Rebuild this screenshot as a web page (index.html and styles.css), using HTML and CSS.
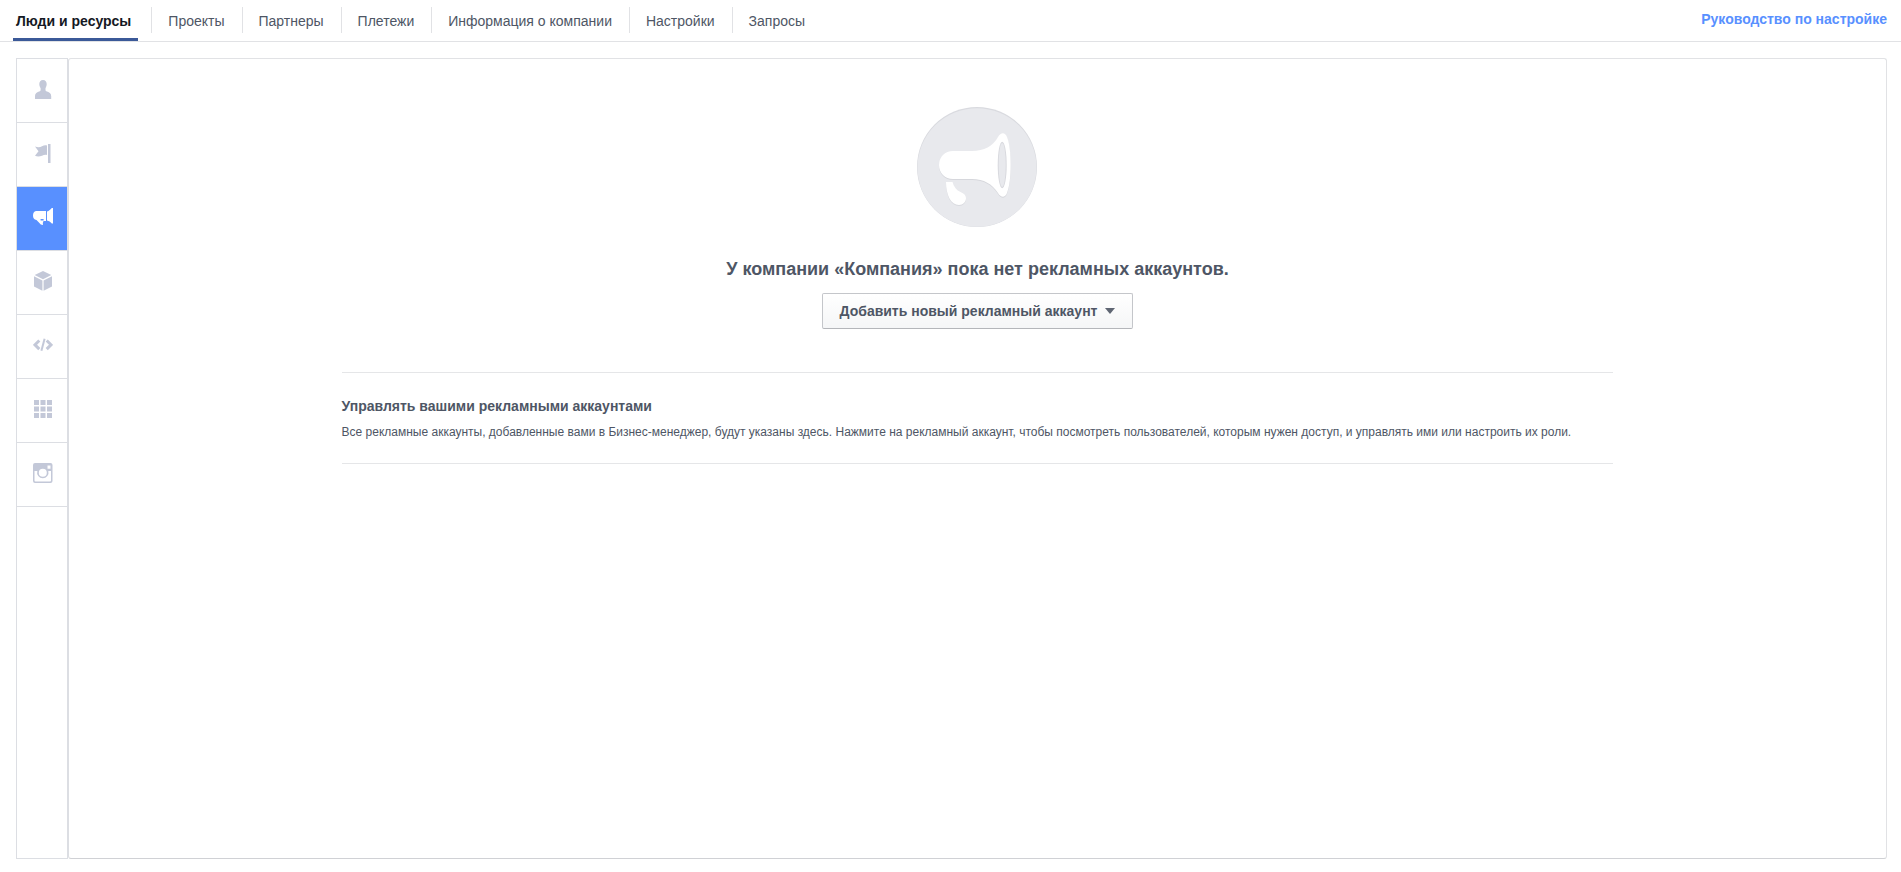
FILE: index.html
```html
<!DOCTYPE html>
<html lang="ru">
  <head>
    <meta charset="UTF-8" />
    <meta name="viewport" content="width=device-width, initial-scale=1" />
    <title>Люди и ресурсы</title>
    <link rel="stylesheet" href="styles.css">
  </head>
  <body>
    <header class="topbar">
      <nav class="tabs">
        <a class="tab active" href="#">Люди и ресурсы</a>
        <a class="tab" href="#">Проекты</a>
        <a class="tab" href="#">Партнеры</a>
        <a class="tab" href="#">Плетежи</a>
        <a class="tab" href="#">Информация о компании</a>
        <a class="tab" href="#">Настройки</a>
        <a class="tab" href="#">Запросы</a>
      </nav>
      <a class="guide" href="#">Руководство по настройке</a>
    </header>

    <main class="content">
      <nav class="sidebar">
        <a class="side-item" href="#" aria-label="Люди">
          <svg width="20" height="20" viewBox="0 0 20 20">
            <path d="M10 1c2.500 0 3.700 1.700 3.700 4 0 1.700-.6 3.200-1.200 4.200v2c0 .5.300.8.800 1 3 1 4.900 2 4.900 4.800v3H2v-3c0-2.800 1.800-3.800 4.800-4.800.5-.2.800-.5.800-1v-2C6.900 8.200 6.300 6.700 6.300 5c0-2.300 1.200-4 3.700-4z" />
          </svg>
        </a>
        <a class="side-item" href="#" aria-label="Страницы">
          <svg width="20" height="20" viewBox="0 0 20 20">
            <path d="M15 1h2v19h-2zM2 3.500c3 1.200 5 .9 7-.2 1.700-.9 3.200-1.300 5-.8v9.500c-1.800-.4-3.300 0-5 .7-2.400 1-4.500 1.200-7 .1l3.500-4.500z" />
            <path class="light" d="M17 1h1v19h-1z" />
          </svg>
        </a>
        <a class="side-item active" href="#" aria-label="Рекламные аккаунты">
          <svg width="20" height="20" viewBox="0 0 20 20">
            <path fill-rule="evenodd" d="M3 4h10v10h-2.500l-.7 2 .2 2-2.200-.5L3.500 13C1 12.500 0 11 0 8.500 0 6 1 4.500 3 4zM7.600 12v1.500h3V12z" />
            <path d="M14 4.500C16 4 17.700 2.400 18.800 1H20v15.500h-1.200c-1.300-1.500-2.800-2.700-4.800-3z" />
          </svg>
        </a>
        <a class="side-item" href="#" aria-label="Каталоги продуктов">
          <svg width="20" height="20" viewBox="0 0 20 20">
            <path d="M10 0l8.300 4-8.300 4.200L1.700 4zM1 5.300l8.400 4.200v10.300L1 15.600zM19 5.300l-8.400 4.200v10.300l8.400-4.200z" />
          </svg>
        </a>
        <a class="side-item" href="#" aria-label="Приложения">
          <svg class="outline" width="20" height="20" viewBox="0 0 20 20">
            <path d="M6.300 5.500L2 9.800l4.300 4.300M13.700 5.500L18 9.800l-4.300 4.300" />
            <path class="slash" d="M11.600 3.800L8.400 15.800" />
          </svg>
        </a>
        <a class="side-item" href="#" aria-label="Группы ресурсов">
          <svg width="20" height="20" viewBox="0 0 20 20">
            <path d="M1 1h5v5H1zM7.500 1h5v5h-5zM14 1h5v5h-5zM1 7.500h5v5H1zM7.500 7.500h5v5h-5zM14 7.500h5v5h-5zM1 14h5v5H1zM7.500 14h5v5h-5zM14 14h5v5h-5z" />
          </svg>
        </a>
        <a class="side-item" href="#" aria-label="Аккаунты Instagram">
          <svg width="20" height="20" viewBox="0 0 20 20">
            <path fill-rule="evenodd" d="M2 0h15.500Q19.500 0 19.500 2v16q0 2-2 2H2q-2 0-2-2V2Q0 0 2 0zM1.500 8v9.500q0 1 1 1H17q1 0 1-1V8h-2.700a5.700 5.700 0 1 1-11 0zM14.500 2.500v3.300h3V2.500zM9.800 5.800a4 4 0 1 0 0 8 4 4 0 1 0 0-8z" />
          </svg>
        </a>
      </nav>

      <section class="panel">
        <div class="inner">
          <div class="empty">
            <svg width="120" height="120" viewBox="0 0 120 120">
              <circle cx="60" cy="60" r="60" fill="#d9dadf" />
              <ellipse cx="60" cy="60.500" rx="59.500" ry="59.300" fill="#e8e9ed" />
              <path d="M36 45h19c12 0 21-5 26-14 3-5 7-5 9 0 5 12 5 44 0 56-2 5-6 5-9 0-6-9-14-14-26-14H36c-8 0-14-6-14-14s6-14 14-14z" fill="#d6d7dc" />
              <path d="M36 44h19c12 0 21-5 26-14 3-5 7-5 9 0 5 12 5 44 0 56-2 5-6 5-9 0-6-9-14-14-26-14H36c-8 0-14-6-14-14s6-14 14-14z" fill="#fff" />
              <ellipse cx="85.200" cy="58" rx="4.500" ry="23.300" fill="#d8d9de" />
              <ellipse cx="85.200" cy="58" rx="3.500" ry="22" fill="#e8e9ed" />
              <path d="M29 76h6.500c1.500 5 4 8.500 8 10 3.500 1.300 5.500 3.500 5.500 6 0 4-3 7-7 7-8 0-13-10-13-23z" fill="#d9dadf" />
              <path d="M29 75h6.500c1.500 5 4 8.500 8 10 3.500 1.300 5.500 3.500 5.500 6 0 4-3 7-7 7-8 0-13-10-13-23z" fill="#fff" />
            </svg>
            <h1>У компании «Компания» пока нет рекламных аккаунтов.</h1>
            <button class="add" type="button">Добавить новый рекламный аккаунт<span class="caret"></span></button>
          </div>
          <div class="info">
            <h2>Управлять вашими рекламными аккаунтами</h2>
            <p>Все рекламные аккаунты, добавленные вами в Бизнес-менеджер, будут указаны здесь. Нажмите на рекламный аккаунт, чтобы посмотреть пользователей, которым нужен доступ, и управлять ими или настроить их роли.</p>
          </div>
        </div>
      </section>
    </main>
  </body>
</html>
```

FILE: styles.css
```css
* {
  box-sizing: border-box;
}

body {
  margin: 0;
  min-height: 100vh;
  display: flex;
  flex-direction: column;
  background-color: #fff;
  color: #4e5665;
  font-family: "Liberation Sans", Arial, sans-serif;
  font-size: 12px;
}

a {
  color: inherit;
  text-decoration: none;
}

h1,
h2,
p {
  margin: 0;
}

/* top navigation */
.topbar {
  display: flex;
  justify-content: space-between;
  border-bottom: 1px solid #e1e2e5;
  padding: 0 14px 0 13px;
  font-size: 14px;
}

.tabs {
  display: flex;
  align-items: flex-start;
}

.tab {
  margin-top: 7px;
  padding: 2px 17px 0 16px;
  line-height: 24px;
  border-left: 1px solid #e1e2e5;
}

.tab.active {
  margin: 0 13px 0 0;
  padding: 9px 7px 5px 3px;
  border-left: 0;
  border-bottom: 3px solid #3b5998;
  color: #141823;
  font-weight: bold;
}

.guide {
  line-height: 38px;
  color: #5890ff;
  font-weight: bold;
}

/* main area */
.content {
  flex: 1;
  display: flex;
  padding: 16px 14px 13px 16px;
}

.sidebar {
  width: 52px;
  border: 1px solid #dcdee3;
}

.side-item {
  display: flex;
  align-items: center;
  justify-content: center;
  height: 64px;
  padding: 0 0 3px 2px;
  border-bottom: 1px solid #dcdee3;
  fill: #c3c8d8;
}

.side-item .light {
  opacity: 0.5;
}

.side-item .outline {
  fill: none;
  stroke: #c3c8d8;
  stroke-width: 3;
}

.side-item .slash {
  stroke-width: 2;
}

.side-item.active {
  background-color: #5890ff;
  fill: #fff;
}

.panel {
  flex: 1;
  border: 1px solid #e1e2e5;
  border-left-color: #dcdee3;
  border-bottom-color: #d0d1d5;
  border-radius: 3px;
}

.inner {
  width: 70%;
  margin: 0 auto;
}

.empty {
  display: flex;
  flex-direction: column;
  align-items: center;
  padding: 48px 0 43px;
}

.empty h1 {
  margin: 30px 0 12px;
  font-size: 18px;
  line-height: 24px;
}

.add {
  display: flex;
  align-items: center;
  height: 36px;
  padding: 0 17px;
  border: 1px solid #c4c6ca;
  border-bottom-color: #b4b6ba;
  border-radius: 2px;
  background: linear-gradient(#fff, #f5f6f7);
  color: #4e5665;
  font-family: inherit;
  font-size: 14px;
  font-weight: bold;
}

.caret {
  margin-left: 8px;
  border: 5px solid transparent;
  border-top: 6px solid #5f6673;
  border-bottom: 0;
}

.info {
  border: 1px solid #e5e6e8;
  border-width: 1px 0;
  padding: 23px 0;
}

.info h2 {
  font-size: 14px;
  line-height: 20px;
}

.info p {
  margin-top: 8px;
  line-height: 16px;
}
```
